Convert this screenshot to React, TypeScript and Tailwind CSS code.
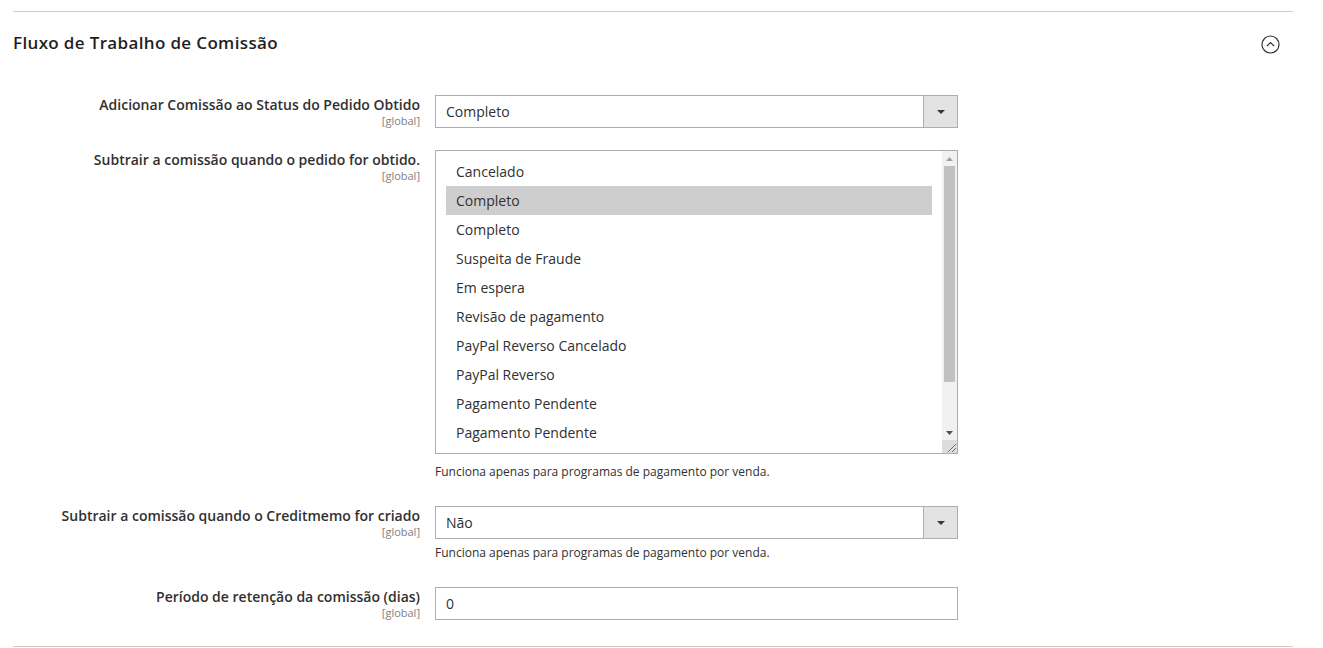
import React from "react";

const Arrow = () => (
  <svg width="8" height="4" viewBox="0 0 8 4"><path d="M0 0h8L4 4z" fill="#41362f" /></svg>
);

function Select({ value }: { value: string }) {
  return (
    <div className="flex h-[33px] w-[523px] border border-[#adadad] bg-white">
      <div className="flex-1 pl-[10px] flex items-center text-[14px] text-[#303030]">{value}</div>
      <div className="w-[34px] bg-[#e3e3e3] border-l border-[#adadad] flex items-center justify-center">
        <Arrow />
      </div>
    </div>
  );
}

function Label({ text }: { text: string }) {
  return (
    <div className="w-[407px] shrink-0 text-right pt-[1px]">
      <div className="text-[14px] leading-[18px] font-semibold text-[#303030]">{text}</div>
      <div className="text-[11px] leading-[13px] text-[#808080]">[global]</div>
    </div>
  );
}

const options = [
  "Cancelado",
  "Completo",
  "Completo",
  "Suspeita de Fraude",
  "Em espera",
  "Revisão de pagamento",
  "PayPal Reverso Cancelado",
  "PayPal Reverso",
  "Pagamento Pendente",
  "Pagamento Pendente",
];

export default function App() {
  return (
    <div className="w-[1323px] h-[648px] bg-white overflow-hidden" style={{ fontFamily: '"Open Sans", sans-serif' }}>
      <div className="ml-[13px] w-[1280px] pt-[11px]">
        <div className="border-t border-[#cccccc]" />
        <div className="flex items-center justify-between pt-[19px]">
          <div className="text-[17px] leading-[24px] font-semibold tracking-[0.35px] text-[#1f1f1f]">Fluxo de Trabalho de Comissão</div>
          <div className="mr-[13px] mt-[2px]">
            <svg width="19" height="19" viewBox="0 0 19 19">
              <circle cx="9.5" cy="9.5" r="8.5" fill="none" stroke="#303030" strokeWidth="1.2" />
              <path d="M5.8 11.2 L9.5 7.5 L13.2 11.2" fill="none" stroke="#303030" strokeWidth="1.2" />
            </svg>
          </div>
        </div>

        {/* Row 1 */}
        <div className="flex mt-[40px]">
          <Label text="Adicionar Comissão ao Status do Pedido Obtido" />
          <div className="ml-[15px]">
            <Select value="Completo" />
          </div>
        </div>

        {/* Row 2 */}
        <div className="flex mt-[22px]">
          <Label text="Subtrair a comissão quando o pedido for obtido." />
          <div className="ml-[15px]">
            <div className="relative h-[304px] w-[523px] border border-[#adadad] bg-white overflow-hidden">
              <div className="pt-[6px] pl-[10px] w-[496px]">
                {options.map((o, i) => (
                  <div
                    key={i}
                    className={`h-[29px] flex items-center pl-[10px] text-[14px] text-[#303030] ${i === 1 ? "bg-[#cecece]" : ""}`}
                  >
                    {o}
                  </div>
                ))}
              </div>
              {/* scrollbar */}
              <div className="absolute right-0 top-0 bottom-0 w-[15px] bg-[#f1f1f1] flex flex-col">
                <div className="h-[15px] flex items-center justify-center">
                  <svg width="7" height="4" viewBox="0 0 7 4"><path d="M0 4h7L3.5 0z" fill="#a3a3a3" /></svg>
                </div>
                <div className="mx-[2px] h-[216px] bg-[#c1c1c1]" />
                <div className="flex-1" />
                <div className="h-[15px] flex items-center justify-center">
                  <svg width="7" height="4" viewBox="0 0 7 4"><path d="M0 0h7L3.5 4z" fill="#505050" /></svg>
                </div>
                <div className="h-[13px] bg-[#dcdcdc] relative">
                  <svg className="absolute right-[1px] bottom-[1px]" width="9" height="9" viewBox="0 0 9 9">
                    <path d="M9 1 L1 9 M9 5 L5 9" stroke="#707070" strokeWidth="1" />
                  </svg>
                </div>
              </div>
            </div>
            <div className="mt-[10px] text-[12px] leading-[15px] text-[#303030]">Funciona apenas para programas de pagamento por venda.</div>
          </div>
        </div>

        {/* Row 3 */}
        <div className="flex mt-[27px]">
          <Label text="Subtrair a comissão quando o Creditmemo for criado" />
          <div className="ml-[15px]">
            <Select value="Não" />
            <div className="mt-[6px] text-[12px] leading-[15px] text-[#303030]">Funciona apenas para programas de pagamento por venda.</div>
          </div>
        </div>

        {/* Row 4 */}
        <div className="flex mt-[27px]">
          <Label text="Período de retenção da comissão (dias)" />
          <div className="ml-[15px]">
            <div className="h-[33px] w-[523px] border border-[#adadad] bg-white pl-[10px] flex items-center text-[14px] text-[#303030]">0</div>
          </div>
        </div>

        <div className="mt-[26px] border-t border-[#cccccc]" />
      </div>
    </div>
  );
}
